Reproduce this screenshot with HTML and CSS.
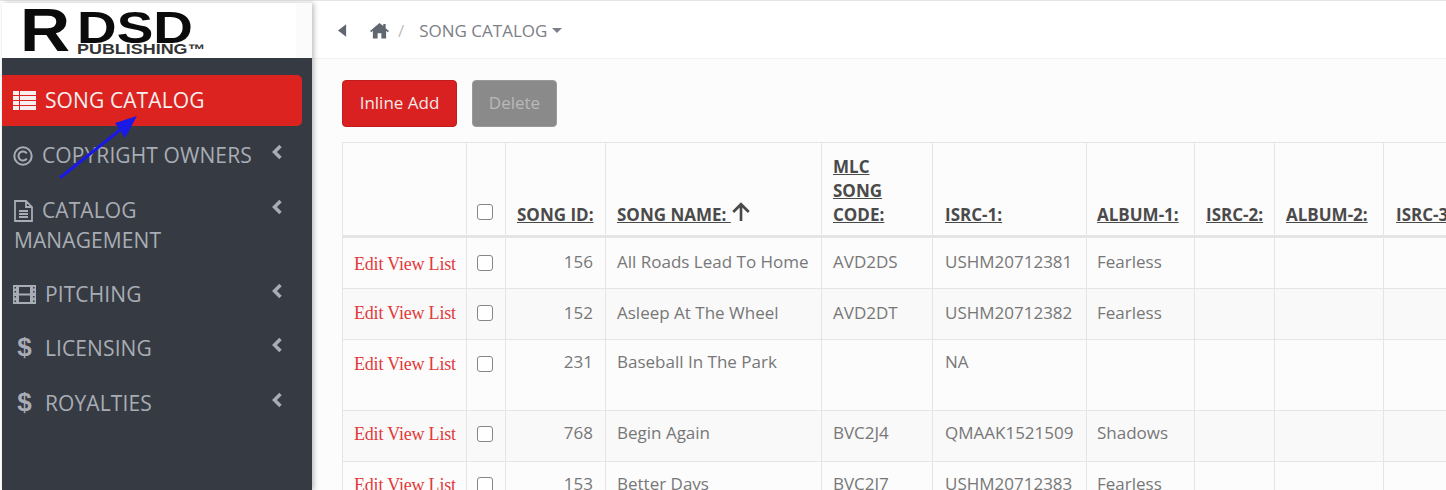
FILE: index.html
```html
<!DOCTYPE html>
<html lang="en">
<head>
<meta charset="utf-8">
<title>Song Catalog</title>
<link rel="stylesheet" href="styles.css">
</head>
<body>
<div class="app">
  <aside class="sidebar">
    <div class="logo">
      <span class="logo-r">R</span>
      <span class="logo-rest"><span class="logo-dsd">DSD</span><span class="logo-pub">PUBLISHING™</span></span>
    </div>
    <nav class="menu">
      <a class="item active"><svg class="ic" viewBox="0 0 23 19"><path d="M0 0h6v4H0zM7 0h16v4H7zM0 5h6v4H0zM7 5h16v4H7zM0 10h6v4H0zM7 10h16v4H7zM0 15h6v4H0zM7 15h16v4H7z" fill="currentColor"/></svg><span>SONG CATALOG</span></a>
      <a class="item"><svg class="ic ic-c" viewBox="0 0 20 20"><circle cx="10" cy="10" r="8.700" fill="none" stroke="currentColor" stroke-width="2"/><path d="M13.800 7.300a4.600 4.600 0 1 0 0 5.400" fill="none" stroke="currentColor" stroke-width="2"/></svg><span class="lbl-c">COPYRIGHT OWNERS</span><svg class="chev" viewBox="0 0 12 16"><path d="M9.500 2 3.500 8l6 6" fill="none" stroke="currentColor" stroke-width="3.500"/></svg></a>
      <a class="item wrap"><svg class="ic ic-f" viewBox="0 0 19 22"><path d="M1 1h11l6 6v14H1zM12 1v6h6M5 11h9M5 14h9M5 17h9" fill="none" stroke="currentColor" stroke-width="1.800"/></svg><span class="lbl-c">CATALOG<br><span class="under">MANAGEMENT</span></span><svg class="chev" viewBox="0 0 12 16"><path d="M9.500 2 3.500 8l6 6" fill="none" stroke="currentColor" stroke-width="3.500"/></svg></a>
      <a class="item"><svg class="ic" viewBox="0 0 23 19"><path d="M0 0h23v19H0zM1.500 2v1.500H3V2zM1.500 6v1.500H3V6zM1.500 11v1.500H3V11zM1.500 15.500V17H3v-1.500zM20 2v1.500h1.500V2zM20 6v1.500h1.500V6zM20 11v1.500h1.500V11zM20 15.500V17h1.500v-1.500zM6 2v6.500h11V2zM6 10.500V17h11v-6.500z" fill="currentColor" fill-rule="evenodd"/></svg><span>PITCHING</span><svg class="chev" viewBox="0 0 12 16"><path d="M9.500 2 3.500 8l6 6" fill="none" stroke="currentColor" stroke-width="3.500"/></svg></a>
      <a class="item"><span class="ic dollar">$</span><span>LICENSING</span><svg class="chev" viewBox="0 0 12 16"><path d="M9.500 2 3.500 8l6 6" fill="none" stroke="currentColor" stroke-width="3.500"/></svg></a>
      <a class="item"><span class="ic dollar">$</span><span>ROYALTIES</span><svg class="chev" viewBox="0 0 12 16"><path d="M9.500 2 3.500 8l6 6" fill="none" stroke="currentColor" stroke-width="3.500"/></svg></a>
    </nav>
    <svg class="arrow" viewBox="0 0 90 70"><path d="M3 67 62 20" stroke="#1a1ae6" stroke-width="3" stroke-linecap="round" fill="none"/><path d="M79 6 67 28 57 13Z" fill="#1a1ae6"/></svg>
  </aside>
  <main class="main">
    <header class="crumbs">
      <svg class="back" viewBox="0 0 10 14"><path d="M9 0v14L0 7z" fill="currentColor"/></svg>
      <svg class="home" viewBox="0 0 20 18"><path d="M10 1 0 9.500l1.200 1.300L3 9.300V17.500h5v-5.500h4v5.500h5V9.300l1.800 1.500L20 9.500 16.500 6.500V2h-2.500v2.300z" fill="currentColor"/></svg>
      <span class="sep">/</span>
      <span class="crumb">SONG CATALOG</span><span class="caret"></span>
    </header>
    <section class="content">
      <div class="actions">
        <button class="btn btn-add">Inline Add</button>
        <button class="btn btn-del">Delete</button>
      </div>
      <table class="grid">
        <colgroup>
          <col class="c1"><col class="c2"><col class="c3"><col class="c4"><col class="c5"><col class="c6"><col class="c7"><col class="c8"><col class="c9"><col class="c10">
        </colgroup>
        <thead>
          <tr>
            <th></th>
            <th class="chk"><input type="checkbox"></th>
            <th><u>SONG ID:</u></th>
            <th><u>SONG NAME: <svg class="up" viewBox="0 0 18 18"><path d="M9 17V2M2 9l7-7 7 7" fill="none" stroke="currentColor" stroke-width="2.400"/></svg></u></th>
            <th><u>MLC<br>SONG<br>CODE:</u></th>
            <th><u>ISRC-1:</u></th>
            <th><u>ALBUM-1:</u></th>
            <th><u>ISRC-2:</u></th>
            <th><u>ALBUM-2:</u></th>
            <th><u>ISRC-3:</u></th>
          </tr>
        </thead>
        <tbody>
          <tr class="r1">
            <td class="links"><a>Edit</a> <a>View</a> <a>List</a></td><td class="chk"><input type="checkbox"></td><td class="num">156</td><td>All Roads Lead To Home</td><td>AVD2DS</td><td>USHM20712381</td><td>Fearless</td><td></td><td></td><td></td>
          </tr>
          <tr class="r2 alt">
            <td class="links"><a>Edit</a> <a>View</a> <a>List</a></td><td class="chk"><input type="checkbox"></td><td class="num">152</td><td>Asleep At The Wheel</td><td>AVD2DT</td><td>USHM20712382</td><td>Fearless</td><td></td><td></td><td></td>
          </tr>
          <tr class="tall">
            <td class="links"><a>Edit</a> <a>View</a> <a>List</a></td><td class="chk"><input type="checkbox"></td><td class="num">231</td><td>Baseball In The Park</td><td></td><td>NA</td><td></td><td></td><td></td><td></td>
          </tr>
          <tr class="alt">
            <td class="links"><a>Edit</a> <a>View</a> <a>List</a></td><td class="chk"><input type="checkbox"></td><td class="num">768</td><td>Begin Again</td><td>BVC2J4</td><td>QMAAK1521509</td><td>Shadows</td><td></td><td></td><td></td>
          </tr>
          <tr>
            <td class="links"><a>Edit</a> <a>View</a> <a>List</a></td><td class="chk"><input type="checkbox"></td><td class="num">153</td><td>Better Days</td><td>BVC2J7</td><td>USHM20712383</td><td>Fearless</td><td></td><td></td><td></td>
          </tr>
        </tbody>
      </table>
    </section>
  </main>
</div>
</body>
</html>
```

FILE: styles.css
```css
* { box-sizing: border-box; }
html, body { margin: 0; height: 100%; overflow: hidden; background: #fff; }
body { font-family: "Open Sans", sans-serif; color: #777; }
.app { display: flex; height: 490px; padding: 2px 0 0 2px; border-top: 1px solid #e4e4e8; }

.sidebar { position: relative; width: 310px; flex: none; display: flex; flex-direction: column; background: #363a42; box-shadow: 2px 0 5px rgba(0,0,0,.25); z-index: 2; }
.logo { height: 55px; background: #fff; border-right: 16px solid #fbfbfb; display: flex; align-items: flex-start; padding: 0 0 0 18px; color: #0b0b0b; font-family: "Liberation Sans", sans-serif; font-weight: 700; }
.logo-r { font-size: 62px; line-height: 42px; height: 42px; margin-top: 6px; width: 57px; flex: none; transform: scaleX(1.12); transform-origin: left; }
.logo-rest { display: flex; flex-direction: column; margin-top: 9px; }
.logo-dsd { font-size: 45px; line-height: 32px; transform: scaleX(1.22); transform-origin: left; }
.logo-pub { font-size: 14px; line-height: 11px; margin-top: 0; color: #333; white-space: nowrap; transform: scaleX(1.28); transform-origin: left; }

.menu { display: flex; flex-direction: column; padding: 17px 10px 0 0; }
.item { display: flex; align-items: flex-start; position: relative; height: 54.500px; padding: 12px 0 0 11px; color: #a8adb5; font-size: 21px; line-height: 28px; letter-spacing: .1px; }
.item.active { height: 51px; margin-bottom: 3px; padding-top: 11px; background: #dc2320; color: #f7efef; border-radius: 0 5px 5px 0; }
.item.wrap { height: 84px; }
.ic { width: 23px; height: 19px; margin: 5px 9px 0 0; flex: none; }
.ic-c { width: 20px; height: 20px; margin: 5px 9px 0 0; }
.ic-f { width: 19px; height: 22px; margin: 4px 9px 0 1px; }
.dollar { font-family: "Liberation Sans", sans-serif; font-size: 26px; font-weight: 700; text-align: center; line-height: 22px; height: 22px; margin-top: 2px; }
.lbl-c { white-space: nowrap; }
.under { display: inline-block; margin-left: -28px; margin-top: 2px; }
.chev { position: absolute; left: 269px; top: 15px; width: 12px; height: 16px; }
.arrow { position: absolute; left: 56px; top: 107px; width: 90px; height: 70px; }

.main { flex: 1; min-width: 0; display: flex; flex-direction: column; }
.crumbs { height: 56px; flex: none; display: flex; align-items: center; padding-left: 26px; background: #fff; border-bottom: 1px solid #f2f2f2; font-size: 17px; }
.back { width: 9px; height: 13px; color: #606770; margin-right: 23px; }
.home { width: 19px; height: 17px; color: #606770; margin-right: 9px; }
.sep { color: #bdbdbd; margin-right: 15px; }
.crumb { color: #7c8087; }
.caret { width: 0; height: 0; margin-left: 5px; border: 5px solid transparent; border-top-color: #7c8087; border-bottom: 0; }

.content { flex: 1; background: #fcfcfc; padding: 21px 0 0 30px; overflow: hidden; }
.actions { display: flex; gap: 15px; height: 62px; align-items: flex-start; }
.btn { font: 17px/1 "Open Sans", sans-serif; border-radius: 4px; height: 47px; padding: 0 0 2px; }
.btn-add { width: 115px; background: #d82120; border: 1px solid #c11d1d; color: #f5e8e8; }
.btn-del { width: 85px; background: #8a8a8a; border: 1px solid #9a9a9a; color: #b9b9b9; }

.grid { border-collapse: collapse; table-layout: fixed; width: 1151px; font-size: 17px; line-height: 24px; }
.c1 { width: 124px; } .c2 { width: 39px; } .c3 { width: 100px; } .c4 { width: 216px; } .c5 { width: 111px; }
.c6 { width: 154px; } .c7 { width: 108px; } .c8 { width: 80px; } .c9 { width: 109px; } .c10 { width: 110px; }
.grid th, .grid td { border: 1.500px solid #e5e5e5; padding: 8px 10px 8px 11px; vertical-align: top; text-align: left; }
.grid th { vertical-align: bottom; color: #4a4a4a; font-weight: 700; height: 94px; border-bottom-width: 3px; padding-bottom: 8px; white-space: nowrap; }
.grid td { height: 51px; padding-top: 10px; white-space: nowrap; }
.grid th:nth-child(6), .grid td:nth-child(6), .grid th:nth-child(10) { padding-left: 12px; }
.grid th:nth-child(7), .grid td:nth-child(7) { padding-left: 10px; }
.grid tr.alt td { background: #f9f9f9; }
.grid tr.tall td { height: 71px; }
.grid tr.r1 td { height: 52px; padding-top: 12px; }
.grid tr.r2 td { height: 51px; padding-top: 12px; }
.grid .chk { padding: 0 0 0 10px; }
.grid th.chk { padding-bottom: 15px; }
.grid td.chk { padding-top: 15px; }
.grid tr.tall td.chk { padding-top: 16px; }
.grid tr.r1 td.chk { padding-top: 17px; }
.grid tr.r2 td.chk { padding-top: 16px; }
.grid td.num { text-align: right; padding-right: 12px; }
.grid td.links { font-family: "Liberation Serif", serif; font-size: 18px; letter-spacing: -.2px; color: #e23a3a; padding: 11px 0 0 11px; }
.grid tr.tall td.links { padding-top: 12px; }
.grid tr.r1 td.links { padding-top: 14px; }
.grid tr.r2 td.links { padding-top: 12px; }
.up { width: 20px; height: 20px; vertical-align: -1px; }
input[type=checkbox] { appearance: none; margin: 0; display: block; width: 16px; height: 16px; border: 1.500px solid #868686; border-radius: 3px; background: #fff; }
```
